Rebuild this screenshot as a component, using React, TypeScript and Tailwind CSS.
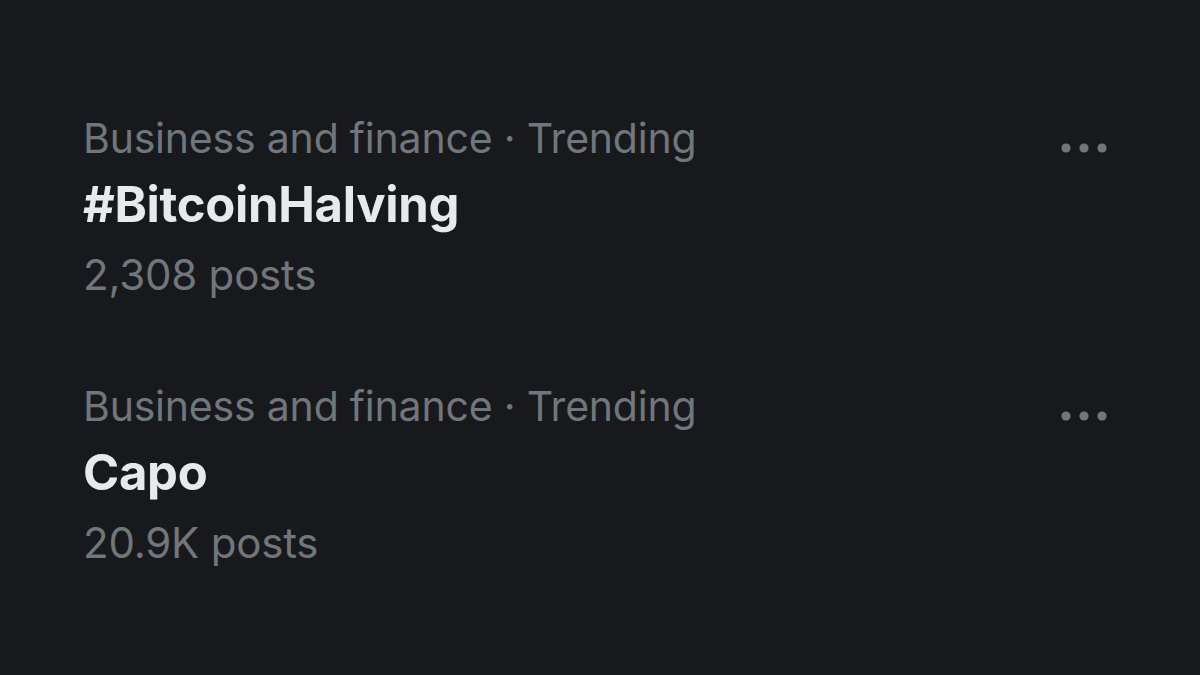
const trends = [
  { meta: "Business and finance · Trending", title: "#BitcoinHalving", posts: "2,308 posts" },
  { meta: "Business and finance · Trending", title: "Capo", posts: "20.9K posts" },
];

function MoreDots() {
  return (
    <svg width="48" height="12" viewBox="0 0 48 12" fill="#71767b" aria-hidden="true">
      <circle cx="5" cy="6" r="4.6" />
      <circle cx="23" cy="6" r="4.6" />
      <circle cx="41" cy="6" r="4.6" />
    </svg>
  );
}

export default function App() {
  return (
    <div
      className="h-[675px] w-[1200px] overflow-hidden bg-[#18191d] pl-[83px] pr-[91px] pt-[107px]"
      style={{ fontFamily: "Inter, 'Noto Sans', sans-serif" }}
    >
      <div className="flex flex-col gap-[66px]">
        {trends.map((t) => (
          <div key={t.title} className="flex items-start justify-between">
            <div className="flex flex-col">
              <span className="text-[41px] leading-[62px] tracking-[-0.2px] text-[#71767b]">{t.meta}</span>
              <span className="text-[49px] font-bold leading-[72px] tracking-[-0.3px] text-[#e7e9ea]">{t.title}</span>
              <span className="text-[42px] leading-[68px] tracking-[-0.2px] text-[#71767b]">{t.posts}</span>
            </div>
            <div className="mt-[35px]">
              <MoreDots />
            </div>
          </div>
        ))}
      </div>
    </div>
  );
}
